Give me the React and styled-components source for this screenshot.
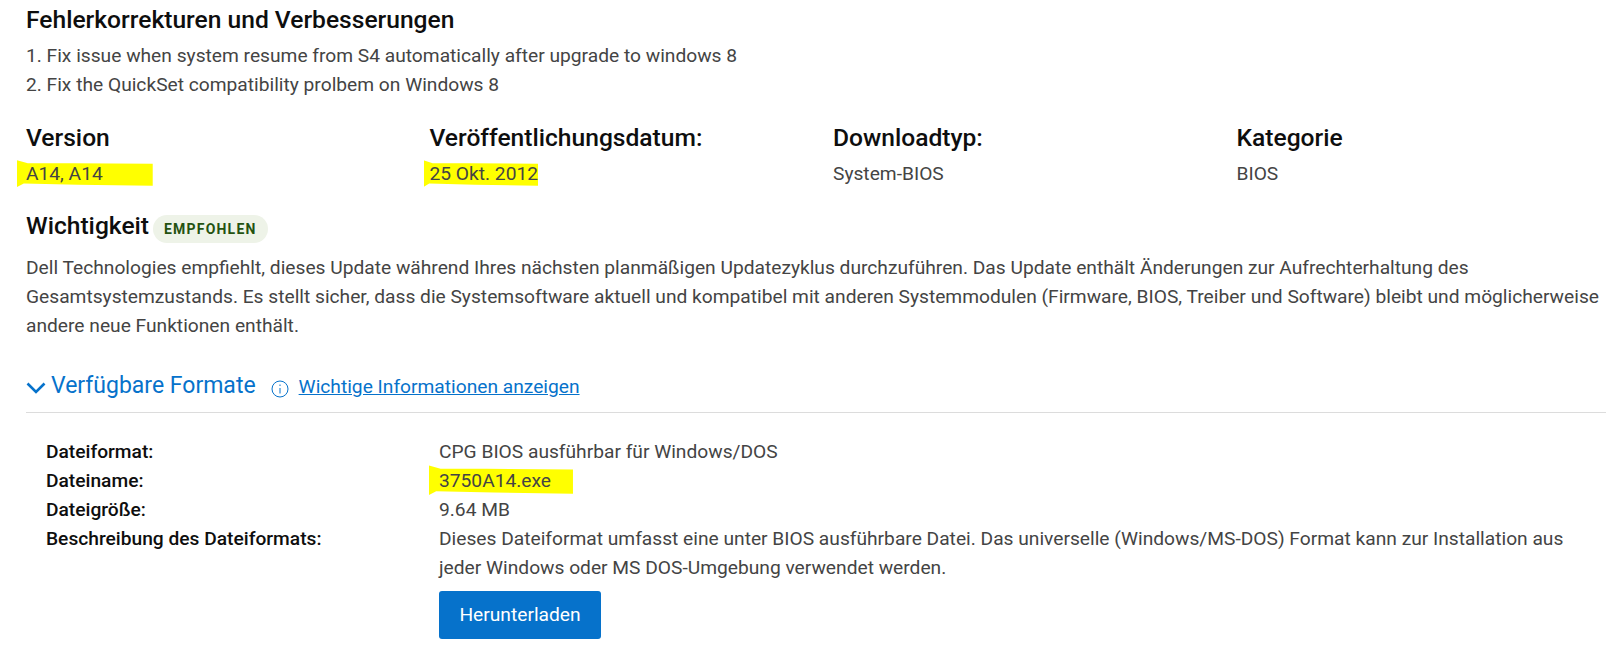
import React from 'react'
import styled, { createGlobalStyle } from 'styled-components'

const GlobalStyle = createGlobalStyle`
  html, body {
    margin: 0;
    padding: 0;
    background: #fff;
    overflow: hidden;
  }
  body {
    font-family: Roboto, "Liberation Sans", sans-serif;
    color: #444;
  }
`

const Page = styled.div`
  width: 1606px;
  height: 647px;
  padding: 5px 0 0 26px;
  box-sizing: border-box;
  overflow: hidden;
`
const Title = styled.h2`
  margin: 0;
  font-size: 24.6px;
  line-height: 30px;
  font-weight: 500;
  color: #0e0e0e;
`
const Fixes = styled.div`
  margin-top: 7px;
  font-size: 19.2px;
  line-height: 28.5px;
`
const InfoGrid = styled.div`
  display: grid;
  grid-template-columns: repeat(4, 403.5px);
  margin-top: 24px;
`
const InfoCell = styled.div`
  display: flex;
  flex-direction: column;
`
const InfoLabel = styled.div`
  font-size: 24.6px;
  line-height: 30px;
  font-weight: 500;
  color: #0e0e0e;
`
const InfoValue = styled.div`
  margin-top: 8px;
  font-size: 19.2px;
  line-height: 26px;
`
const Mark = styled.span`
  position: relative;
  display: inline-block;
  z-index: 0;

  &::before {
    content: '';
    position: absolute;
    z-index: -1;
    left: ${p => p.$left}px;
    right: ${p => p.$right}px;
    top: -3px;
    bottom: 0;
    background: #ffff00;
    clip-path: polygon(0 8%, 8% 18%, 40% 18%, 100% 20%, 100% 96%, 45% 92%, 5% 88%, 0 100%);
  }
`
const ImportanceRow = styled.div`
  display: flex;
  align-items: flex-start;
  margin-top: 24px;
`
const Badge = styled.span`
  margin: 4px 0 0 4px;
  padding: 0 11px;
  height: 28px;
  border-radius: 14px;
  background: #eef3e8;
  color: #245210;
  font-size: 14px;
  font-weight: 700;
  letter-spacing: 1.2px;
  display: flex;
  align-items: center;
`
const Description = styled.p`
  margin: 10px 0 0;
  font-size: 19.2px;
  line-height: 29px;
  white-space: nowrap;
`
const FormatsHeader = styled.div`
  display: flex;
  align-items: center;
  margin-top: 27px;
  height: 36px;
  color: #0672cb;
`
const Chevron = styled.svg`
  margin-top: 5px;
  flex: none;
`
const FormatsTitle = styled.span`
  margin-left: 5px;
  font-size: 23px;
`
const InfoIcon = styled.svg`
  margin: 8px 0 0 15px;
  flex: none;
`
const InfoLink = styled.a`
  margin: 2px 0 0 10px;
  font-size: 19.2px;
  color: #0672cb;
  text-decoration: underline;
`
const Divider = styled.div`
  margin-top: 9px;
  height: 1px;
  background: #dcdcdc;
`
const FormatTable = styled.div`
  display: grid;
  grid-template-columns: 393px 1fr;
  margin: 24px 0 0 20px;
  font-size: 19.2px;
  line-height: 29px;
`
const FormatLabel = styled.div`
  font-weight: 500;
  color: #0e0e0e;
`
const FormatValue = styled.div`
  padding-right: 30px;
`
const DownloadButton = styled.button`
  margin: 9px 0 0 413px;
  display: block;
  width: 162px;
  height: 48px;
  padding: 0 0 2px;
  border: 0;
  border-radius: 3px;
  background: #0672cb;
  color: #fff;
  font: 400 19.2px Roboto, sans-serif;
`

export default function App() {
  return (
    <Page>
      <GlobalStyle />
      <Title>Fehlerkorrekturen und Verbesserungen</Title>
      <Fixes>
        <div>1. Fix issue when system resume from S4 automatically after upgrade to windows 8</div>
        <div>2. Fix the QuickSet compatibility prolbem on Windows 8</div>
      </Fixes>
      <InfoGrid>
        <InfoCell>
          <InfoLabel>Version</InfoLabel>
          <InfoValue><Mark $left={-9} $right={-50}>A14, A14</Mark></InfoValue>
        </InfoCell>
        <InfoCell>
          <InfoLabel>Veröffentlichungsdatum:</InfoLabel>
          <InfoValue><Mark $left={-6} $right={0}>25 Okt. 2012</Mark></InfoValue>
        </InfoCell>
        <InfoCell>
          <InfoLabel>Downloadtyp:</InfoLabel>
          <InfoValue>System-BIOS</InfoValue>
        </InfoCell>
        <InfoCell>
          <InfoLabel>Kategorie</InfoLabel>
          <InfoValue>BIOS</InfoValue>
        </InfoCell>
      </InfoGrid>
      <ImportanceRow>
        <InfoLabel>Wichtigkeit</InfoLabel>
        <Badge>EMPFOHLEN</Badge>
      </ImportanceRow>
      <Description>
        Dell Technologies empfiehlt, dieses Update während Ihres nächsten planmäßigen Updatezyklus durchzuführen. Das Update enthält Änderungen zur Aufrechterhaltung des<br />
        Gesamtsystemzustands. Es stellt sicher, dass die Systemsoftware aktuell und kompatibel mit anderen Systemmodulen (Firmware, BIOS, Treiber und Software) bleibt und möglicherweise<br />
        andere neue Funktionen enthält.
      </Description>
      <FormatsHeader>
        <Chevron width="20" height="14" viewBox="0 0 20 14" fill="none" stroke="#0672cb" strokeWidth="2.6">
          <path d="M1.5 2.5 L10 11 L18.5 2.5" />
        </Chevron>
        <FormatsTitle>Verfügbare Formate</FormatsTitle>
        <InfoIcon width="18" height="18" viewBox="0 0 18 18" fill="none" stroke="#0672cb" strokeWidth="1">
          <circle cx="9" cy="9" r="8" />
          <path d="M9 8 V13.5 M9 4.5 V6" />
        </InfoIcon>
        <InfoLink>Wichtige Informationen anzeigen</InfoLink>
      </FormatsHeader>
      <Divider />
      <FormatTable>
        <FormatLabel>Dateiformat:</FormatLabel>
        <FormatValue>CPG BIOS ausführbar für Windows/DOS</FormatValue>
        <FormatLabel>Dateiname:</FormatLabel>
        <FormatValue><Mark $left={-10} $right={-22}>3750A14.exe</Mark></FormatValue>
        <FormatLabel>Dateigröße:</FormatLabel>
        <FormatValue>9.64 MB</FormatValue>
        <FormatLabel>Beschreibung des Dateiformats:</FormatLabel>
        <FormatValue>
          Dieses Dateiformat umfasst eine unter BIOS ausführbare Datei. Das universelle (Windows/MS-DOS) Format kann zur Installation aus jeder Windows oder MS DOS-Umgebung verwendet werden.
        </FormatValue>
      </FormatTable>
      <DownloadButton>Herunterladen</DownloadButton>
    </Page>
  )
}
